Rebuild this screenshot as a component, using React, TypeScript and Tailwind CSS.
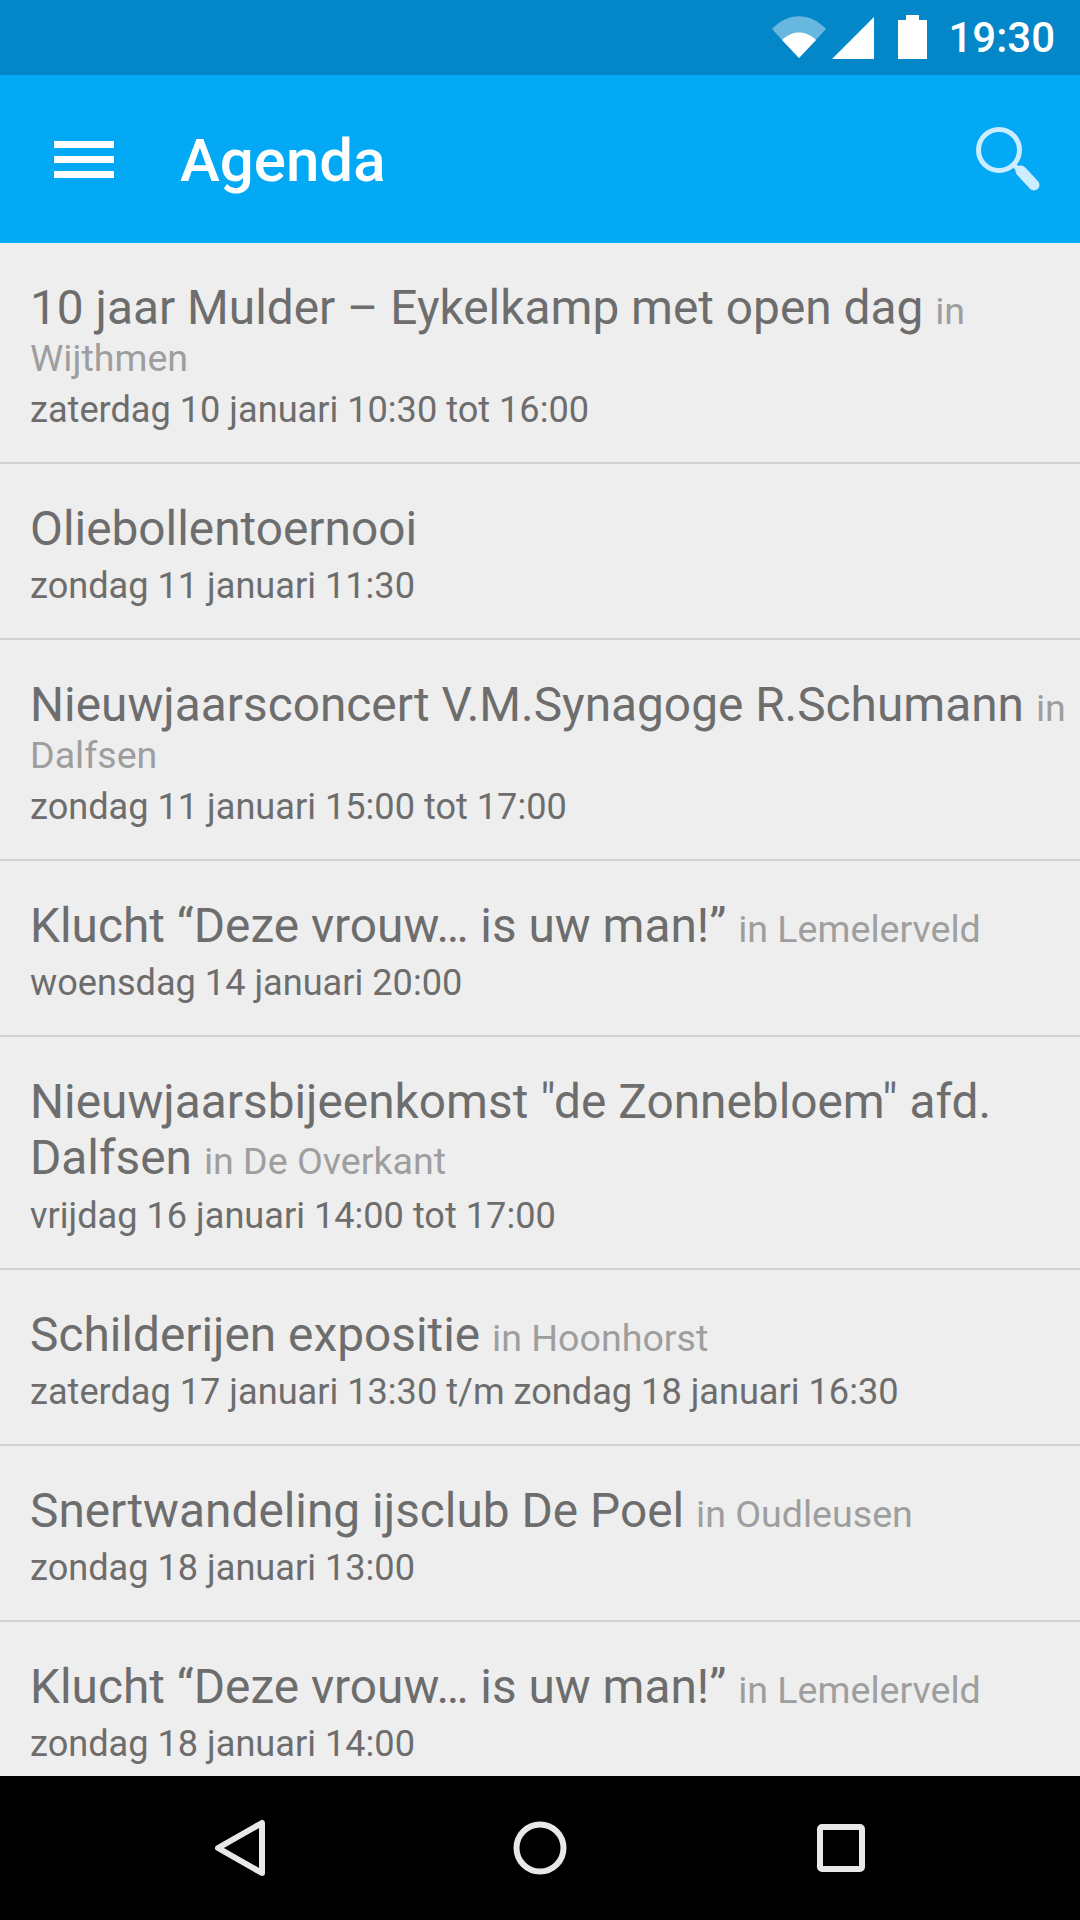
const events: { title: string; place?: string; date: string; dateGap?: string }[] = [
  { title: "10 jaar Mulder – Eykelkamp met open dag", place: "Wijthmen", date: "zaterdag 10 januari 10:30 tot 16:00" },
  { title: "Oliebollentoernooi", date: "zondag 11 januari 11:30" },
  { title: "Nieuwjaarsconcert V.M.Synagoge R.Schumann", place: "Dalfsen", date: "zondag 11 januari 15:00 tot 17:00" },
  { title: "Klucht “Deze vrouw… is uw man!”", place: "Lemelerveld", date: "woensdag 14 januari 20:00" },
  { title: "Nieuwjaarsbijeenkomst \"de Zonnebloem\" afd. Dalfsen", place: "De Overkant", date: "vrijdag 16 januari 14:00 tot 17:00", dateGap: "mt-[9px]" },
  { title: "Schilderijen expositie", place: "Hoonhorst", date: "zaterdag 17 januari 13:30 t/m zondag 18 januari 16:30" },
  { title: "Snertwandeling ijsclub De Poel", place: "Oudleusen", date: "zondag 18 januari 13:00" },
  { title: "Klucht “Deze vrouw… is uw man!”", place: "Lemelerveld", date: "zondag 18 januari 14:00" },
];

export default function App() {
  return (
    <div className="w-[1080px] h-[1920px] flex flex-col overflow-hidden bg-[#eeeeee] font-['Roboto',sans-serif]">
      <div className="h-[75px] shrink-0 bg-[#0387c8] flex items-center justify-end pr-[25px]">
        <svg width="56" height="44" viewBox="0 0 56 44" className="mt-[-2px]">
          <path d="M1 14 C17 -3 39 -3 55 14 L28 43 Z" fill="#ffffff" fillOpacity="0.4" />
          <path d="M11 25 C21 15 35 15 45 25 L28 43 Z" fill="#ffffff" />
        </svg>
        <svg width="42" height="42" viewBox="0 0 42 42" className="ml-[5px]">
          <path d="M42 0 V42 H0 Z" fill="#ffffff" />
        </svg>
        <svg width="29" height="44" viewBox="0 0 29 44" className="ml-[24px] mt-[-2px]">
          <path d="M0 5 H8 V0 H21 V5 H29 V44 H0 Z" fill="#ffffff" />
        </svg>
        <span className="ml-[21px] text-[42px] leading-none font-medium text-white">19:30</span>
      </div>
      <header className="h-[168px] shrink-0 bg-[#03a9f4] flex items-center">
        <div className="ml-[54px] w-[60px] flex flex-col gap-[8px]">
          <div className="h-[7px] bg-white" />
          <div className="h-[7px] bg-white" />
          <div className="h-[7px] bg-white" />
        </div>
        <h1 className="ml-[66px] mt-[4px] text-[60px] leading-none font-medium text-white">Agenda</h1>
        <svg width="70" height="70" viewBox="0 0 70 70" className="ml-auto mr-[37px]" fill="none">
          <circle cx="26" cy="26" r="20.5" stroke="#ccecff" strokeWidth="5" />
          <path d="M41 41 L48 48" stroke="#ccecff" strokeWidth="5" />
          <path d="M48 47 L61 61" stroke="#ccecff" strokeWidth="11" strokeLinecap="round" />
        </svg>
      </header>
      <main className="flex-1 min-h-0 overflow-hidden">
        <ul>
          {events.map((e, i) => (
            <li key={i} className="box-border border-b-2 border-[#d2d2d2] pl-[30px] pr-[10px] pt-[37px] pb-[31px]">
              <p className="text-[37.6px] leading-[45px] text-[#9e9e9e]">
                <span className="text-[47.8px] leading-[56px] text-[#6d6d6d]">{e.title}{e.place ? " " : ""}</span>
                {e.place ? <>in {e.place}</> : null}
              </p>
              <p className={`${e.dateGap ?? "mt-[8px]"} text-[36.15px] leading-[42px] text-[#6d6d6d]`}>{e.date}</p>
            </li>
          ))}
        </ul>
      </main>
      <nav className="h-[144px] shrink-0 bg-black flex items-center">
        <svg width="54" height="58" viewBox="0 0 54 58" className="ml-[213px]" fill="none">
          <path d="M49 4 V54 L5 29 Z" stroke="#e8e8e8" strokeWidth="6" strokeLinejoin="round" />
        </svg>
        <svg width="54" height="54" viewBox="0 0 54 54" className="ml-[246px]" fill="none">
          <circle cx="27" cy="27" r="23.5" stroke="#e8e8e8" strokeWidth="6" />
        </svg>
        <svg width="48" height="48" viewBox="0 0 48 48" className="ml-[250px]" fill="none">
          <rect x="3" y="3" width="42" height="42" rx="2" stroke="#e8e8e8" strokeWidth="6" />
        </svg>
      </nav>
    </div>
  );
}
